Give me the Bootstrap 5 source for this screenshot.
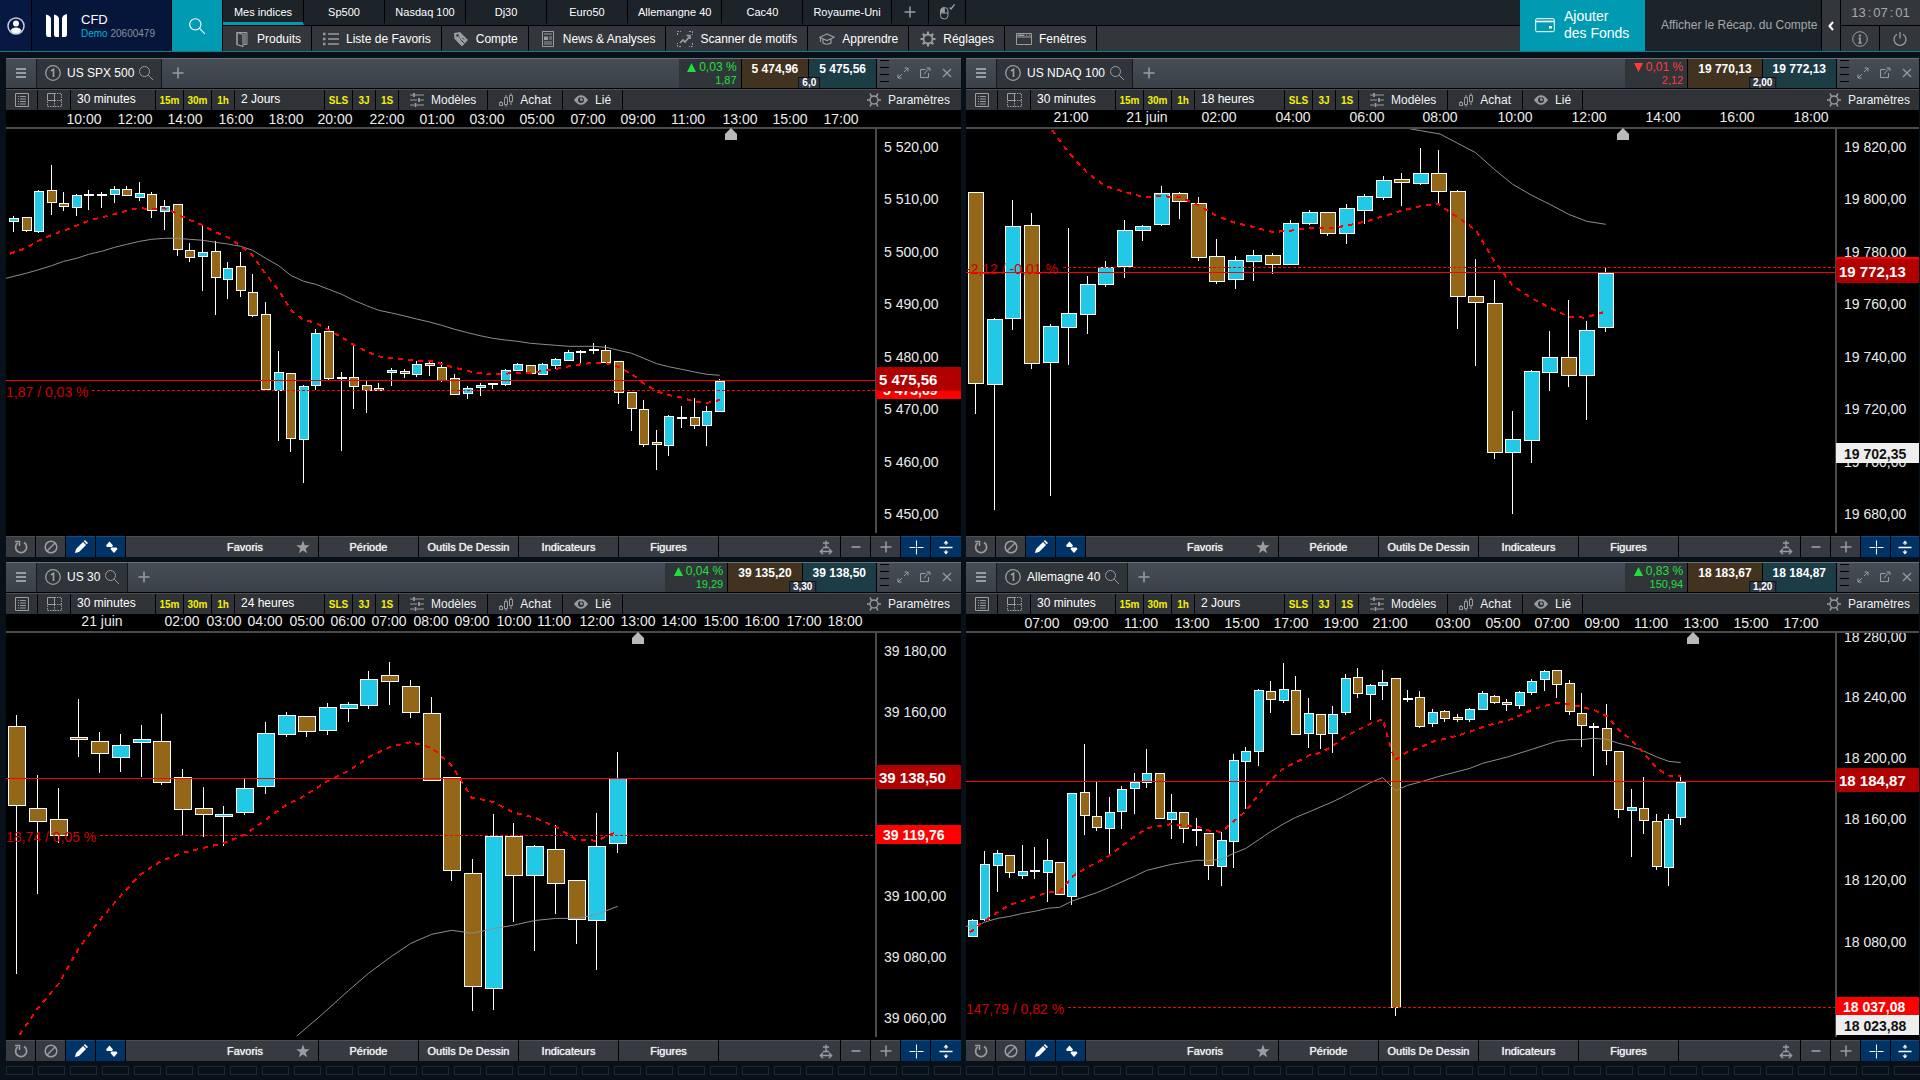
<!DOCTYPE html>
<html lang="fr">
<head>
<meta charset="utf-8">
<meta name="viewport" content="width=device-width, initial-scale=1">
<title>CFD – Mes indices</title>
<link href="https://cdn.jsdelivr.net/npm/bootstrap@5.3.0/dist/css/bootstrap.min.css" rel="stylesheet">
<style>
:root { --teal: #009ab3; --ink: #dfe3e6; --icon: #9a9da0; --up: #22c9e6; --down: #936618; }
body { height: 100vh; min-height: 720px; background: #08111a; color: var(--ink); font: 12px/16px "Liberation Sans", Arial, sans-serif; overflow-x: hidden; }
button, select, a { font: inherit; color: inherit; text-decoration: none; border: 0; border-radius: 0; background: none; padding: 0; }
button:hover, a:hover { filter: brightness(1.15); color: inherit; }
svg.ico { width: 16px; height: 16px; fill: none; stroke: currentColor; color: var(--icon); flex: none; display: block; }

/* top bar */
.top-bar { height: 52px; background: #1c242a; border-bottom: 1px solid #167c8c; }
.brand-zone { background: #06153a; border-right: 1px solid #000; }
.user-btn { width: 32px; }
.account { width: 140px; padding-left: 14px; gap: 14px; }
.account-name { font-size: 13px; line-height: 16px; color: #fff; }
.account-id { font-size: 10px; line-height: 12px; color: #8a919c; }
.account-id b { font-weight: 400; color: #00b4dc; }
.search-btn { width: 51px; background: var(--teal); border-right: 1px solid #000; }
.tab-row { height: 26px; border-bottom: 1px solid #000; }
.tab-row > * { min-width: 81px; padding: 2px 10px 0; border-right: 1px solid #000; font-size: 11px; line-height: 20px; height: 25px; display: block; text-align: center; color: #fff; border-bottom: 3px solid transparent; }
.tab-row > .active { border-bottom-color: var(--teal); }
.tab-row > .tab-tool { min-width: 37px; padding: 2px 9px 0; }
.menu-row { height: 25px; background: #33363a; }
.menu-row > button { display: flex; align-items: center; gap: 7px; padding: 0 10px 0 11px; border-right: 1px solid #000; color: #fff; }
.fund-btn { width: 125px; background: var(--teal); color: #fff; font-size: 14px; line-height: 17px; text-align: left; padding: 0 0 2px 15px; gap: 9px; }
.recap-btn { width: 177px; padding: 0 10px 2px 16px; white-space: nowrap; color: #a5a9ac; border-right: 1px solid #000; }
.side-btn { width: 19px; background: #33363a; border-right: 1px solid #000; }
.clock-zone { width: 79px; background: #33363a; }
.clock { height: 26px; font-size: 13px; gap: 2px; color: #a5a9ac; border-bottom: 1px solid #000; }
.clock-zone button { width: 39px; height: 25px; border-right: 1px solid #000; }
.clock-zone button:last-child { border-right: 0; }

/* chart windows */
.board { display: grid; grid-template-columns: 955fr 953fr; grid-template-rows: minmax(0, 1fr) minmax(0, 1fr); gap: 5px; padding: 6px 1px 5px 6px; min-height: 0; }
.chart-win { --tail: 84px; background: #000; min-width: 0; min-height: 0; }
.chart-win:nth-child(even) { --tail: 82px; }
.win-title { height: 31px; border-bottom: 1px solid #000; background: linear-gradient(#474d55, #3b4148); border-top: 1px solid #6a7078; }
.win-title button { display: flex; align-items: center; justify-content: center; padding-bottom: 2px; }
.win-title .win-menu { width: 31px; border-right: 1px solid #15181b; }
.win-title .instrument { gap: 6px; padding: 0 7px 2px 8px; background: #303539; color: #fff; border-right: 1px solid #15181b; }
.win-title .win-add { width: 32px; }
.instrument svg:last-child { margin-left: -2px; }
.change-box { width: 63px; background: #303539; border-right: 1px solid #000; padding: 1px 4px 0 0; text-align: right; line-height: 14px; }
.change-box small { font-size: 11px; line-height: 12px; display: block; }
.change-box svg { width: 9px; height: 9px; fill: currentColor; }
.is-up { color: #1fe03a; }
.is-down { color: #ff3b3b; }
.quote-box { position: relative; }
.win-title .quote-box > button { padding: 0 10px 9px; font-weight: 700; color: #fff; }
.q-bid { background: #41331f; border-right: 1px solid #000 !important; }
.q-ask { background: #1c3d46; border-right: 1px solid #000 !important; }
.spread { position: absolute; left: 50%; bottom: 0; transform: translateX(-50%); background: #303742; border: 1px solid #101418; border-bottom: 0; padding: 0 3px; font-size: 10px; line-height: 10px; font-weight: 700; color: #fff; }
.win-tail { width: var(--tail); padding-left: 3px; }
.win-tail button { width: 22px; }
.tick-stack { width: 9px; height: 27px; background: repeating-linear-gradient(#000 0 1px, #3f454c 1px 7px); margin-right: 3px; }

.tool-row { height: 21px; background: #2f3337; border-top: 1px solid #4b5054; }
.tool-row > * { border-right: 1px solid #000; display: flex; align-items: center; justify-content: center; }
.tool-row select { appearance: none; color: #fff; background: #2f3337; padding: 0 6px 2px; width: 85px; outline: 0; height: 20px; }
.tool-row select.span-sel { width: 90px; }
.tool-row .quick { font-size: 10px; font-weight: 700; color: #f5f000; width: 23px; padding-top: 1px; }
.tool-row .quick.wide { width: 28px; }
.tool-row .named { gap: 7px; padding: 0 11px 1px; color: #eef0f1; }
.tool-row .named svg { width: 14px; }
.tool-row .params { margin-left: auto; border-right: 0; padding-right: calc(var(--tail) - 73px); }
.icon-cell { width: 32px; }
.icon-cell + .icon-cell { width: 33px; }

.plot-area { min-height: 0; overflow: hidden; }
.plot-area svg { display: block; width: 100%; height: 100%; font: 14px "Liberation Sans", Arial, sans-serif; fill: #ececec; }

.draw-row { height: 21px; background: #000; gap: 1px; }
.draw-row > * { background: #373b41; border-top: 1px solid #4b5054; display: flex; align-items: center; justify-content: center; width: 29px; flex: none; }
.draw-row .on { background: #003366; border-top-color: #1a4a7c; color: #fff; }
.draw-row .on svg { color: #fff; }
.draw-row .wide-btn { width: 99px; padding-bottom: 1px; font-size: 11px; color: #f2f4f5; text-shadow: 0 0 1px #f2f4f5; }
.draw-row .fav-zone { width: 192px; justify-content: flex-end; }
.fav-zone .wide-btn { width: 100px; }
.fav-zone .star-btn { width: 23px; }
.draw-row .fill-zone { flex: 1 1 0; justify-content: flex-end; min-width: 29px; }
.fill-zone button { width: 29px; display: flex; justify-content: center; }
.draw-row .last-btn { width: calc(var(--tail) - 54px); }

.dock { height: 9px; margin: 0 0 5px 6px; gap: 5px; overflow: hidden; flex: none; }
.dock i { width: 27px; border: 1px solid #1d2831; flex: none; }
</style>
<script src="https://cdn.jsdelivr.net/npm/bootstrap@5.3.0/dist/js/bootstrap.bundle.min.js"></script>
</head>
<body class="d-flex flex-column m-0">

<svg width="0" height="0" class="d-none" aria-hidden="true">
  <symbol id="i-search" viewBox="0 0 16 16"><circle cx="6.5" cy="6.5" r="5"/><path d="M10.2 10.2 15 15"/></symbol>
  <symbol id="i-book" viewBox="0 0 16 16"><path d="M3 14V1.5h10v12h-3"/><path d="M3 1.5 9 3.5V15.5L3 13.5zM11 2v11" stroke-width="1.2"/></symbol>
  <symbol id="i-list" viewBox="0 0 16 16"><path d="M5 3h11M5 8h11M5 13h11" stroke-width="1.5"/><path d="M0 3h2.5M0 8h2.5M0 13h2.5" stroke-width="2.5"/></symbol>
  <symbol id="i-tag" viewBox="0 0 16 16"><path d="M1 2 7 1l8 8-6 6.5L1.500 8z" fill="currentColor" stroke="none"/><circle cx="4.500" cy="4.500" r="1.300" fill="#33363a" stroke="none"/><path d="m7.500 8.500 4 4M9.500 7l1.500 1.500M6.500 6.500l1 1" stroke="#33363a"/></symbol>
  <symbol id="i-news" viewBox="0 0 16 16"><path d="M2.500.5h11v15h-11z"/><path d="M4 3h8M9 6h3M9 8h3M4 11h8M4 13h8"/><path d="M4 5.500h4v3.500H4z" fill="currentColor" stroke="none"/></symbol>
  <symbol id="i-scan" viewBox="0 0 16 16"><path d="M.5 4V.5H4M12 .5h3.500V4M15.500 12v3.500H12M4 15.500H.5V12" stroke-dasharray="2 1"/><path d="m3 12 3-3 2 2 5-6M9.500 4.500H13V8" stroke-width="1.600"/></symbol>
  <symbol id="i-cap" viewBox="0 0 16 16"><path d="M8 3 .8 6.300 8 9.500l7.200-3.200zM4 8v4q4 2.500 8 0V8M1.500 7v4" stroke-width="1.200"/></symbol>
  <symbol id="i-gear" viewBox="0 0 16 16"><circle cx="8" cy="8" r="4.500" stroke-width="1.800"/><path d="M8 .5V3M8 13v2.500M.5 8H3M13 8h2.500M2.700 2.700l1.700 1.700M11.600 11.600l1.700 1.700M2.700 13.300l1.700-1.700M11.600 4.400l1.700-1.700" stroke-width="2.200"/></symbol>
  <symbol id="i-window" viewBox="0 0 16 16"><path d="M.5 2.500h15v11H.5zM.5 6h15"/><path d="M1.500 4.300h7" stroke-width="1.600"/><path d="M10 4.300h1.500M13 4.300h1.500"/></symbol>
  <symbol id="i-plus" viewBox="0 0 16 16"><path d="M8 2.500v11M2.500 8h11" stroke-width="1.500"/></symbol>
  <symbol id="i-minus" viewBox="0 0 16 16"><path d="M3.500 8h9" stroke-width="1.600"/></symbol>
  <symbol id="i-mouse" viewBox="0 0 16 16"><rect x="1.500" y="3.500" width="7.500" height="11.500" rx="3.500"/><path d="M1.500 9H9M5.200 3.500V9"/><path d="M2 8V6Q3 4 5 4v4z" fill="currentColor"/><path d="m10.500 3.500 1.500 1.500L15.500.5" stroke-width="1.300"/></symbol>
  <symbol id="i-card" viewBox="0 0 20 16"><rect x=".7" y="1.700" width="18.600" height="13" rx="1"/><path d="M1 4.500h18" stroke-width="1.600"/><path d="M14 9h3v2.500h-3z" fill="currentColor" stroke="none"/></symbol>
  <symbol id="i-left" viewBox="0 0 8 10"><path d="M6 1 2.500 5 6 9" stroke-width="2"/></symbol>
  <symbol id="i-info" viewBox="0 0 16 16"><circle cx="8" cy="8" r="7.300"/><circle cx="8" cy="4.600" r="1.200" fill="currentColor" stroke="none"/><path d="M6.500 7.300H8V12M6.300 12h3.500" stroke-width="1.700"/></symbol>
  <symbol id="i-power" viewBox="0 0 16 16"><path d="M5 3.200a6 6 0 1 0 6 0M8 1v6.500" stroke-width="1.300"/></symbol>
  <symbol id="i-burger" viewBox="0 0 16 16"><path d="M3 4h10M3 8h10M3 12h10" stroke-width="2"/></symbol>
  <symbol id="i-one" viewBox="0 0 16 16"><circle cx="8" cy="8" r="7.300" stroke-width="1.300"/><path d="M6 6 8.500 4.300V12" stroke-width="1.700"/></symbol>
  <symbol id="i-expand" viewBox="0 0 12 12"><path d="M7.500 1H11v3.500M11 1 7 5M4.500 11H1V7.500M1 11l4-4"/></symbol>
  <symbol id="i-popout" viewBox="0 0 12 12"><path d="M6.500 2.500h-5v8h8V6M5 7l5-5.500M7.500 1H11v3"/></symbol>
  <symbol id="i-close" viewBox="0 0 12 12"><path d="m2 2 8 8M10 2l-8 8" stroke-width="1.200"/></symbol>
  <symbol id="i-sheet" viewBox="0 0 16 16"><path d="M1.500 1.500h13v13h-13z"/><path d="M6 4.500h6M6 7h6M6 9.500h6M6 12h6"/><path d="M4 4.500h1M4 7h1M4 9.500h1M4 12h1"/></symbol>
  <symbol id="i-layout" viewBox="0 0 16 16"><path d="M1.500 1.500h7v7h-7z"/><path d="M8.500 1.500h7v13h-14v-6M8.500 8.500v6M8.500 8.500h7" stroke-dasharray="1.500 1"/></symbol>
  <symbol id="i-sliders" viewBox="0 0 14 16"><path d="M0 3h3M5 3h9M0 8h7M9.500 8H14M0 13h4M6.500 13H14" stroke-width="1.200"/><path d="M4 1v4M9 6v4M5.500 11v4" stroke-width="1.800"/></symbol>
  <symbol id="i-candles" viewBox="0 0 14 16"><path d="M.5 10.500h3v3h-3zM5.500 5.500h3v7h-3zM10.500 3.500h3v6h-3zM2 9v1.500M7 3v2.500M7 12.500V15M12 1v2.500M12 9.500V13"/></symbol>
  <symbol id="i-eye" viewBox="0 0 14 16"><path d="M0 8Q3 3.300 7 3.300T14 8q-3 4.700-7 4.700T0 8z" fill="currentColor" stroke="none"/><circle cx="7" cy="8" r="3" fill="#2f3337" stroke="none"/><path d="M7 5.500V8h2" stroke-width="1.400"/></symbol>
  <symbol id="i-cog" viewBox="0 0 14 16"><circle cx="7" cy="8" r="4" stroke-width="1.300"/><path d="M3 1.500 4.700 4.800M11 1.500 9.300 4.800M3 14.500l1.700-3.300M11 14.500l-1.700-3.300M0 8h3M11 8h3" stroke-width="1.500"/></symbol>
  <symbol id="i-reload" viewBox="0 0 16 16"><path d="M11 3.500a5.500 5.500 0 1 1-6.500.5" stroke-width="1.700"/><path d="M2 2.500h4.500V7" stroke-width="1.500"/></symbol>
  <symbol id="i-ban" viewBox="0 0 16 16"><circle cx="8" cy="8" r="5.800" stroke-width="1.500"/><path d="m4 12 8-8" stroke-width="1.500"/></symbol>
  <symbol id="i-pencil" viewBox="0 0 16 16"><path d="m2 14 1-4 7-7 3 3-7 7zM10.700 2.300 12 1l3 3-1.300 1.300z" fill="currentColor" stroke="none"/></symbol>
  <symbol id="i-updown" viewBox="0 0 16 16"><path d="M3 6.500 6.500 2.500 10 6.500 9 8H4zM8 8.500h5.500l1 1.500L11 14l-3.500-4z" fill="currentColor" stroke="none"/></symbol>
  <symbol id="i-star" viewBox="0 0 16 16"><path d="m8 1.500 1.700 4.700 5 .1-4 3.100 1.500 4.900L8 11.400l-4.200 2.900 1.500-4.900-4-3.100 5-.1z" fill="currentColor" stroke="none"/></symbol>
  <symbol id="i-fit" viewBox="0 0 16 16"><path d="M8 1.500v7M5 4h6M5 8.500h6M2 12.500h12M5 9.800 2.300 12.500 5 15.200M11 9.800l2.700 2.700L11 15.200" stroke-width="1.300"/></symbol>
  <symbol id="i-cross" viewBox="0 0 16 16"><path d="M8.500 1.500v6M8.500 9.500v6M1.500 8.500h6M9.500 8.500h6M8 8.500h1"/></symbol>
  <symbol id="i-split" viewBox="0 0 16 16"><path d="M1.500 8.500h13" stroke-width="1.500"/><path d="M8 3v3M8 11v3"/><path d="m5.500 4.500 2.500-3 2.500 3zM5.500 12.500l2.500 3 2.500-3z" fill="currentColor" stroke="none"/></symbol>
</svg>

<header class="top-bar d-flex flex-shrink-0">
  <button class="brand-zone user-btn d-flex align-items-center justify-content-center" aria-label="Profil">
    <svg class="ico" style="width:18px;height:18px" viewBox="0 0 18 18"><circle cx="9" cy="9" r="8" stroke="#aeb4c0" stroke-width="1.500"/><circle cx="9" cy="6.500" r="3" fill="#d5d9e0" stroke="none"/><path d="M3.500 13.500Q5 10.500 9 10.500t5.500 3Q12.500 16.500 9 16.500t-5.500-3z" fill="#d5d9e0" stroke="none"/></svg>
  </button>
  <div class="brand-zone account d-flex align-items-center">
    <svg width="21" height="24" viewBox="0 0 21 24" fill="#fff" aria-label="Logo"><path d="M0 .5Q5 1.500 5 5v18H2Q0 23 0 20zM8 .5q5 1 5 4.500v18h-3q-2 0-2-3zM21 0v20q0 3-2 3h-3V5q0-4 5-5z"/></svg>
    <div>
      <div class="account-name">CFD</div>
      <div class="account-id"><b>Demo</b> 20600479</div>
    </div>
  </div>
  <button class="search-btn d-flex align-items-center justify-content-center" aria-label="Rechercher"><svg class="ico" style="width:18px;height:18px;color:#fff"><use href="#i-search"/></svg></button>

  <div class="flex-grow-1 d-flex flex-column">
    <nav class="tab-row d-flex" aria-label="Espaces de travail">
      <a href="#" class="active">Mes indices</a><a href="#">Sp500</a><a href="#">Nasdaq 100</a><a href="#">Dj30</a><a href="#">Euro50</a><a href="#">Allemangne 40</a><a href="#">Cac40</a><a href="#">Royaume-Uni</a>
      <button class="tab-tool" aria-label="Ajouter un espace"><svg class="ico mx-auto"><use href="#i-plus"/></svg></button>
      <button class="tab-tool" aria-label="Options de souris"><svg class="ico mx-auto"><use href="#i-mouse"/></svg></button>
    </nav>
    <div class="menu-row d-flex">
      <button><svg class="ico"><use href="#i-book"/></svg>Produits</button>
      <button><svg class="ico"><use href="#i-list"/></svg>Liste de Favoris</button>
      <button><svg class="ico"><use href="#i-tag"/></svg>Compte</button>
      <button><svg class="ico"><use href="#i-news"/></svg>News &amp; Analyses</button>
      <button><svg class="ico"><use href="#i-scan"/></svg>Scanner de motifs</button>
      <button><svg class="ico"><use href="#i-cap"/></svg>Apprendre</button>
      <button><svg class="ico"><use href="#i-gear"/></svg>Réglages</button>
      <button><svg class="ico"><use href="#i-window"/></svg>Fenêtres</button>
    </div>
  </div>

  <button class="fund-btn d-flex align-items-center"><svg class="ico" style="width:20px;color:#fff"><use href="#i-card"/></svg><span>Ajouter<br>des Fonds</span></button>
  <button class="recap-btn">Afficher le Récap. du Compte</button>
  <button class="side-btn d-flex align-items-center justify-content-center" aria-label="Déplier"><svg class="ico" style="width:8px;height:10px;color:#fff"><use href="#i-left"/></svg></button>
  <div class="clock-zone">
    <div class="clock d-flex align-items-center justify-content-center"><span>13</span><span>:</span><span>07</span><span>:</span><span>01</span></div>
    <div class="d-flex">
      <button class="d-flex align-items-center justify-content-center" aria-label="Informations"><svg class="ico"><use href="#i-info"/></svg></button>
      <button class="d-flex align-items-center justify-content-center" aria-label="Déconnexion"><svg class="ico"><use href="#i-power"/></svg></button>
    </div>
  </div>
</header>

<main class="board flex-grow-1" id="board"></main>
<footer class="dock d-flex" id="dock"></footer>

<script>
// Candle: x, body top, body bottom, wick top, wick bottom, kind (U up, D down, N neutral).
// Horizontal units are thirds of a pixel; each chart gives its own vertical scale.
const charts = [
{ name:'US SPX 500', span:'2 Jours', pct:'0,03 %', diff:'1,87', up:true, bid:'5 474,96', ask:'5 475,56', spread:'6,0',
  sy:3, oy:10, body:10, timeY:14,
  times:[[251,'10:00'],[404,'12:00'],[555,'14:00'],[708,'16:00'],[857,'18:00'],[1005,'20:00'],[1160,'22:00'],[1310,'01:00'],[1461,'03:00'],[1611,'05:00'],[1764,'07:00'],[1914,'09:00'],[2064,'11:00'],[2219,'13:00'],[2369,'15:00'],[2522,'17:00']],
  prices:[[82,'5 520,00'],[238,'5 510,00'],[397,'5 500,00'],[553,'5 490,00'],[711,'5 480,00'],[868,'5 470,00'],[1027,'5 460,00'],[1183,'5 450,00']],
  now:[781,'5 475,56'], ref:[811,'5 473,69','1,87 / 0,03 %',276], mark:2194,
  candles:`41 295 305 288 336 U|78 291 332 291 336 D|116 213 335 210 339 U|155 210 248 135 285 D|191 249 261 216 273 D|230 225 264 222 288 U|266 223 228 210 270 N|305 223 228 216 264 N|344 207 224 198 249 U|380 207 228 198 228 D|419 219 234 186 243 U|455 222 272 216 294 D|494 258 276 240 330 U|533 252 389 252 408 D|569 390 413 369 426 D|608 396 410 315 513 U|647 393 473 363 585 D|683 444 479 426 537 U|722 438 512 396 531 D|758 516 587 462 591 D|797 582 809 546 809 D|836 756 812 693 963 U|872 759 956 759 996 D|911 798 960 795 1089 U|947 639 797 627 810 U|986 633 776 618 780 D|1025 770 776 756 993 N|1061 771 801 675 867 D|1100 795 812 783 879 D|1136 804 812 789 812 D|1175 750 758 744 798 U|1214 753 761 747 774 D|1250 732 765 723 771 U|1289 729 738 723 768 D|1325 741 782 726 786 D|1364 774 825 762 825 D|1403 804 822 798 837 U|1441 795 804 790 828 U|1478 789 795 789 807 N|1517 750 794 747 797 U|1553 732 753 729 753 U|1592 735 761 735 761 D|1628 732 764 729 764 U|1667 717 738 714 747 U|1706 696 722 690 722 U|1742 692 698 690 729 N|1781 687 692 669 702 N|1817 690 728 675 728 D|1856 723 818 723 852 D|1895 816 866 816 933 D|1931 867 974 840 981 D|1970 966 974 930 1050 D|2006 888 977 885 1008 U|2045 891 896 858 924 N|2084 891 917 834 927 D|2120 873 917 858 978 U|2159 782 876 777 876 U`,
  fast:'30,401 75,386 116,362 155,345 191,332 230,317 266,302 305,292 344,282 380,272 410,265 455,266 494,265 520,276 545,289 569,300 608,316 647,337 683,352 722,377 758,407 797,463 836,510 872,570 911,600 947,608 986,630 1025,652 1061,674 1100,695 1136,709 1175,714 1214,719 1250,722 1289,722 1325,732 1364,743 1403,753 1440,760 1478,764 1517,761 1553,758 1592,758 1628,753 1667,747 1706,739 1742,733 1781,728 1817,729 1856,741 1895,762 1931,790 1970,814 2006,825 2045,833 2084,845 2120,849 2159,840',
  slow:'18,475 78,460 116,449 155,437 191,424 230,415 266,403 305,394 344,382 380,373 419,364 455,358 494,355 533,355 569,358 608,361 647,367 683,372 722,379 758,391 797,415 836,437 872,466 911,484 947,493 986,508 1025,523 1061,541 1100,557 1136,571 1175,579 1214,588 1250,597 1289,606 1325,616 1364,628 1403,638 1440,647 1478,655 1517,660 1553,664 1592,670 1628,673 1667,676 1706,679 1781,679 1817,682 1856,691 1895,700 1931,715 1970,731 2006,740 2045,748 2084,756 2120,763 2159,766' },
{ name:'US NDAQ 100', span:'18 heures', pct:'0,01 %', diff:'2,12', up:false, bid:'19 770,13', ask:'19 772,13', spread:'2,00',
  sy:3, oy:10, body:16, timeY:12,
  times:[[332,'21:00'],[562,'21 juin'],[776,'02:00'],[998,'04:00'],[1220,'06:00'],[1441,'08:00'],[1664,'10:00'],[1886,'12:00'],[2109,'14:00'],[2331,'16:00'],[2552,'18:00']],
  prices:[[82,'19 820,00'],[238,'19 800,00'],[397,'19 780,00'],[553,'19 760,00'],[711,'19 740,00'],[868,'19 720,00'],[1027,'19 700,00'],[1183,'19 680,00']],
  now:[457,'19 772,13'], ref:[442,'19 774,25','-2,12 / -0,01 %',309], last:[969,'19 702,35'], mark:1990,
  candles:`47 216 791 216 882 D|104 597 794 594 1170 U|158 318 596 240 630 U|215 315 731 279 747 D|272 618 728 612 1128 U|326 579 623 324 735 U|383 492 584 468 642 U|437 441 494 423 501 U|494 330 440 300 474 U|548 318 332 315 363 U|605 219 314 198 318 U|659 219 245 216 297 D|716 249 413 231 423 D|770 408 486 357 492 D|827 420 479 408 507 U|881 405 425 390 483 U|938 405 434 399 462 D|992 309 434 300 434 U|1049 276 311 270 315 U|1103 276 341 276 348 D|1160 264 341 252 372 U|1214 228 272 222 312 U|1271 180 233 168 240 U|1325 177 188 159 258 D|1382 159 191 84 195 U|1436 159 215 90 249 D|1493 213 530 210 627 D|1547 528 548 417 738 D|1604 549 998 480 1017 D|1658 957 998 873 1182 U|1715 753 962 750 1029 U|1769 711 758 633 813 U|1826 711 767 540 801 D|1880 630 767 603 900 U|1937 458 623 444 636 U`,
  fast:'276,30 326,98 383,160 437,198 494,216 548,230 605,229 659,231 716,256 770,288 827,309 881,321 938,336 992,332 1049,323 1103,326 1160,317 1214,305 1271,288 1325,272 1382,258 1435,251 1455,266 1493,292 1547,330 1604,425 1658,497 1715,535 1769,563 1826,590 1875,593 1930,577',
  slow:'1325,22 1382,32 1440,42 1493,70 1547,98 1604,149 1658,193 1715,226 1769,253 1826,283 1880,304 1937,313' },
{ name:'US 30', span:'24 heures', pct:'0,04 %', diff:'19,29', up:true, bid:'39 135,20', ask:'39 138,50', spread:'3,30',
  sy:2.9585, oy:-64, body:18, timeY:12,
  times:[[305,'21 juin'],[545,'02:00'],[671,'03:00'],[794,'04:00'],[920,'05:00'],[1043,'06:00'],[1166,'07:00'],[1292,'08:00'],[1415,'09:00'],[1541,'10:00'],[1663,'11:00'],[1790,'12:00'],[1913,'13:00'],[2037,'14:00'],[2162,'15:00'],[2285,'16:00'],[2411,'17:00'],[2535,'18:00']],
  prices:[[300,'39 180,00'],[480,'39 160,00'],[1024,'39 100,00'],[1204,'39 080,00'],[1385,'39 060,00']],
  now:[676,'39 138,50'], ref:[844,'39 119,76','18,74 / 0,05 %',300], mark:1915,
  candles:`50 521 756 488 1254 D|113 763 804 666 1018 D|176 796 846 704 867 D|236 553 561 441 612 D|299 565 603 538 660 D|362 577 614 544 657 U|425 559 570 518 672 U|485 565 688 485 695 D|548 672 768 648 843 D|611 763 783 701 849 D|671 781 789 757 876 U|734 704 777 677 784 U|797 541 700 509 722 U|860 488 546 479 553 U|920 491 538 491 553 D|983 464 535 453 547 U|1046 457 469 450 509 U|1106 382 461 358 470 U|1169 370 392 331 459 D|1232 402 481 385 497 D|1295 482 682 435 682 D|1355 672 949 672 979 D|1418 956 1293 914 1364 D|1481 846 1299 781 1361 U|1541 846 964 808 1101 D|1604 877 964 873 1186 U|1667 885 988 814 1077 D|1730 976 1094 976 1166 D|1790 877 1097 778 1243 U|1853 676 870 598 896 U`,
  fast:'59,1434 113,1356 176,1283 236,1179 299,1095 362,1023 420,961 485,919 548,896 611,881 671,867 734,842 797,798 860,753 900,735 983,684 1046,653 1106,613 1169,583 1232,568 1295,585 1355,637 1385,685 1415,733 1445,738 1481,746 1541,777 1604,792 1667,819 1730,857 1790,860 1845,836',
  slow:'890,1438 957,1382 1046,1303 1106,1252 1169,1206 1232,1164 1295,1137 1355,1125 1418,1134 1440,1129 1481,1120 1541,1110 1604,1096 1667,1090 1730,1090 1790,1078 1853,1054' },
{ name:'Allemagne 40', span:'2 Jours', pct:'0,83 %', diff:'150,94', up:true, bid:'18 183,67', ask:'18 184,87', spread:'1,20',
  sy:2.9585, oy:-64, body:10, timeY:14,
  times:[[247,'07:00'],[394,'09:00'],[544,'11:00'],[695,'13:00'],[845,'15:00'],[993,'17:00'],[1142,'19:00'],[1291,'21:00'],[1478,'03:00'],[1628,'05:00'],[1775,'07:00'],[1925,'09:00'],[2074,'11:00'],[2222,'13:00'],[2372,'15:00'],[2523,'17:00']],
  prices:[[256,'18 280,00'],[436,'18 240,00'],[616,'18 200,00'],[797,'18 160,00'],[977,'18 120,00'],[1160,'18 080,00']],
  now:[684,'18 184,87'], ref:[1353,'18 037,08','147,79 / 0,82 %',324], last:[1376,'18 023,88'], mark:2200,
  candles:`38 1095 1144 1092 1144 U|74 929 1094 891 1098 U|113 896 935 888 1012 U|149 902 955 902 970 D|188 950 963 873 973 U|224 947 952 879 973 N|263 917 955 855 1041 U|299 923 1021 923 1021 D|335 719 1026 719 1050 U|374 716 787 574 843 D|410 787 822 686 831 D|449 775 824 731 899 U|485 707 774 698 825 U|524 685 706 660 781 U|560 660 689 589 704 U|597 660 795 660 795 D|635 775 798 722 855 U|671 775 824 775 867 D|710 826 830 793 876 N|746 837 935 837 976 D|785 858 938 834 994 U|821 621 863 604 941 U|857 595 627 583 766 U|896 414 598 411 639 U|932 417 443 388 482 D|971 411 446 334 453 U|1007 414 546 373 546 D|1046 482 543 438 586 U|1082 485 546 485 589 D|1118 485 543 462 601 U|1157 379 482 367 488 U|1193 376 426 349 438 D|1232 399 429 396 503 U|1268 391 402 355 444 U|1307 379 1355 379 1379 D|1343 438 443 414 450 N|1379 435 524 417 527 D|1418 479 515 470 524 U|1454 476 500 473 509 D|1493 494 502 485 509 D|1529 470 503 467 509 U|1568 423 473 417 473 U|1604 432 453 429 456 D|1640 450 459 441 476 D|1679 420 462 417 470 U|1715 388 423 382 429 U|1754 358 385 355 417 U|1790 355 399 355 438 D|1829 393 479 385 488 D|1865 482 521 423 583 D|1901 521 526 512 669 N|1940 527 595 456 636 D|1976 595 769 595 793 D|2015 760 771 707 908 U|2051 763 802 672 840 D|2090 802 938 781 947 D|2126 796 941 781 994 U|2162 685 793 669 814 U`,
  fast:'30,1131 60,1107 74,1098 113,1071 149,1050 188,1038 224,1026 263,1012 299,1012 335,967 374,943 410,925 449,904 485,875 524,848 560,823 597,817 635,811 671,815 710,818 746,830 785,834 821,803 857,773 896,722 932,681 971,645 1007,629 1046,608 1082,600 1118,580 1157,551 1193,533 1232,514 1268,500 1285,560 1304,622 1343,597 1379,585 1418,567 1450,560 1500,547 1529,538 1568,524 1604,513 1640,506 1679,490 1715,473 1754,461 1790,453 1829,457 1865,464 1901,473 1940,491 1976,532 2015,563 2051,600 2090,646 2126,667 2162,668',
  slow:'18,1113 50,1112 74,1101 113,1090 149,1084 188,1075 224,1069 263,1060 299,1057 335,1039 410,1014 449,998 485,982 524,965 560,948 597,939 635,930 671,924 710,918 746,918 785,915 821,897 857,883 896,857 932,833 971,810 1007,791 1046,775 1118,745 1157,726 1193,707 1232,688 1268,673 1307,712 1343,696 1379,687 1440,669 1529,646 1568,631 1640,613 1715,590 1790,566 1829,561 1865,561 1901,557 1940,560 1976,572 2015,581 2051,595 2090,612 2126,625 2162,629' }
];

const ico = (id, cls = '') => `<svg class="ico ${cls}" aria-hidden="true"><use href="#i-${id}"/></svg>`;
const iconBtn = (id, label, cls = '') => `<button class="${cls}" aria-label="${label}">${ico(id)}</button>`;

const windowHtml = (c, i) => `
<section class="chart-win d-flex flex-column" aria-label="${c.name}">
  <div class="win-title d-flex flex-shrink-0">
    ${iconBtn('burger', 'Menu', 'win-menu')}
    <button class="instrument">${ico('one')}<span>${c.name}</span>${ico('search')}</button>
    ${iconBtn('plus', 'Ajouter un produit', 'win-add')}
    <div class="change-box ms-auto ${c.up ? 'is-up' : 'is-down'}"><svg viewBox="0 0 9 9" aria-hidden="true"><path d="${c.up ? 'M0 9 4.5 0 9 9z' : 'M0 0h9L4.5 9z'}"/></svg> ${c.pct}<small>${c.diff}</small></div>
    <div class="quote-box d-flex">
      <button class="q-bid">${c.bid}</button><button class="q-ask">${c.ask}</button>
      <span class="spread">${c.spread}</span>
    </div>
    <div class="win-tail d-flex align-items-center">
      <span class="tick-stack"></span>
      <button aria-label="Agrandir"><svg class="ico" style="width:12px;height:12px"><use href="#i-expand"/></svg></button>
      <button aria-label="Détacher"><svg class="ico" style="width:12px;height:12px"><use href="#i-popout"/></svg></button>
      <button aria-label="Fermer"><svg class="ico" style="width:12px;height:12px"><use href="#i-close"/></svg></button>
    </div>
  </div>
  <div class="tool-row d-flex flex-shrink-0">
    ${iconBtn('sheet', 'Liste', 'icon-cell')}
    ${iconBtn('layout', 'Disposition', 'icon-cell')}
    <select aria-label="Intervalle" id="interval${i}"><option>30 minutes</option></select>
    <button class="quick wide">15m</button><button class="quick wide">30m</button><button class="quick">1h</button>
    <select class="span-sel" aria-label="Période affichée" id="span${i}"><option>${c.span}</option></select>
    <button class="quick wide">SLS</button><button class="quick">3J</button><button class="quick">1S</button>
    <button class="named">${ico('sliders')}Modèles</button>
    <button class="named">${ico('candles')}Achat</button>
    <button class="named">${ico('eye')}Lié</button>
    <button class="named params">${ico('cog')}Paramètres</button>
  </div>
  <div class="plot-area flex-grow-1"><svg id="plot${i}" role="img" aria-label="Graphique ${c.name}"></svg></div>
  <div class="draw-row d-flex flex-shrink-0">
    ${iconBtn('reload', 'Réinitialiser')}${iconBtn('ban', 'Effacer')}
    ${iconBtn('pencil', 'Dessiner', 'on')}${iconBtn('updown', 'Ordres', 'on')}
    <div class="fav-zone"><button class="wide-btn">Favoris</button><button class="star-btn" aria-label="Étoile">${ico('star')}</button></div>
    <button class="wide-btn">Période</button><button class="wide-btn">Outils De Dessin</button><button class="wide-btn">Indicateurs</button><button class="wide-btn">Figures</button>
    <div class="fill-zone">${iconBtn('fit', 'Ajuster')}</div>
    ${iconBtn('minus', 'Zoom arrière')}${iconBtn('plus', 'Zoom avant')}
    ${iconBtn('cross', 'Réticule', 'on')}${iconBtn('split', 'Échelle', 'on last-btn')}
  </div>
</section>`;

function drawPlot(c, i) {
  const svg = document.getElementById('plot' + i);
  const w = svg.clientWidth, h = svg.clientHeight, tail = i % 2 ? 83 : 85;
  const axis = w - tail, kx = axis / 870, ky = h / 426;
  const X = u => Math.floor(u / 3 - 6) * kx, Y = u => Math.round((u / c.sy + c.oy) * ky);
  const row = u => Math.floor((u / c.sy + c.oy) * ky);
  const px = u => Math.round(X(u));
  const poly = s => s.split(' ').map(p => { const [a, b] = p.split(',').map(Number); return ((a / 3 - 6) * kx).toFixed(1) + ',' + ((b / c.sy + c.oy) * ky).toFixed(1); }).join(' ');
  const bw = Math.max(4, Math.round(c.body * kx / 2) * 2);
  let o = `<clipPath id="clip${i}"><rect x="0" y="19" width="${w}" height="${h - 22}"/></clipPath>`;
  c.times.forEach(([u, t]) => o += `<text x="${Math.round((u / 3 - 6) * kx)}" y="${c.timeY}" text-anchor="middle">${t}</text>`);
  o += `<g clip-path="url(#clip${i})"><g shape-rendering="crispEdges">`;
  c.candles.split('|').forEach(s => {
    const [x, t, b, wt, wb, k] = s.split(' '), cx = px(+x), left = cx - (bw / 2 - 1), top = Y(+t), hh = Math.max(2, Y(+b) - top);
    o += `<rect x="${cx}" y="${Y(+wt)}" width="1" height="${Y(+wb) - Y(+wt)}" fill="#fff"/><rect x="${left}" y="${top}" width="${bw}" height="${hh}" fill="#fff"/>`;
    if (hh > 2 && k !== 'N') o += `<rect x="${left + 1}" y="${top + 1}" width="${bw - 2}" height="${hh - 2}" fill="${k === 'U' ? '#22c9e6' : '#936618'}"/>`;
  });
  const ny = row(c.now[0]), ry = row(c.ref[0]);
  o += `</g><polyline points="${poly(c.slow)}" fill="none" stroke="#8e8e8e"/>
    <polyline points="${poly(c.fast)}" fill="none" stroke="#f00" stroke-width="2" stroke-dasharray="5 5" shape-rendering="crispEdges"/>
    <text x="0" y="${ry + 7}" fill="#d00000">${c.ref[2]}</text>
    <g shape-rendering="crispEdges"><path d="M${px(c.ref[3])} ${ry}.5H${axis}" stroke="#f00" stroke-dasharray="3 2"/>
    <rect y="${ny}" width="${axis}" height="1" fill="#f00"/>
    <rect x="${axis - 1}" y="19" width="2" height="${h - 22}" fill="#4a4a4a"/></g>`;
  c.prices.forEach(([u, t]) => o += `<text x="${axis + 8}" y="${Y(u) + 5}">${t}</text>`);
  o += `<rect x="${axis}" y="${ry - 10}" width="${tail}" height="19" fill="#f00"/><text x="${axis + 7}" y="${ry + 5}" font-weight="700" fill="#fff">${c.ref[1]}</text>`;
  if (c.last) o += `<rect x="${axis}" y="${Y(c.last[0])}" width="${tail}" height="20" fill="#eee"/><text x="${axis + 8}" y="${Y(c.last[0]) + 16}" fill="#111" font-weight="700">${c.last[1]}</text>`;
  o += `<path d="M${w} ${ny - 13}H${axis + 2}l-2 2v20l2 2H${w}z" fill="#b00000"/><text x="${axis + 3}" y="${ny + 5}" font-size="15" font-weight="700" fill="#fff">${c.now[1]}</text></g>
    <rect y="17" width="${w}" height="2" fill="#4a4a4a"/>`;
  const m = px(c.mark);
  o += `<path d="M${m} 18l6 6v6h-12v-6z" fill="#b9b9b9"/>`;
  svg.innerHTML = o;
}

document.getElementById('board').innerHTML = charts.map(windowHtml).join('');
document.getElementById('dock').innerHTML = '<i></i>'.repeat(80);
const drawAll = () => charts.forEach(drawPlot);
drawAll();
addEventListener('resize', drawAll);
</script>
</body>
</html>
